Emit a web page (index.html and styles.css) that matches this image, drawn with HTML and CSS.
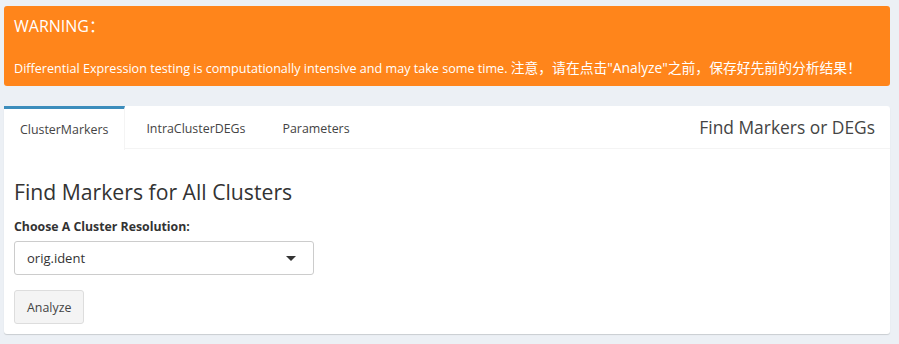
FILE: index.html
```html
<!DOCTYPE html>
<html>
<head>
<meta charset="utf-8">
<link rel="stylesheet" href="styles.css">
</head>
<body>
<div class="warning">
  <div class="warn-title">WARNING：</div>
  <div class="warn-text">Differential Expression testing is computationally intensive and may take some time. <span class="cjk">注意，请在点击"Analyze"之前，保存好先前的分析结果！</span></div>
</div>
<div class="tabbox">
  <div class="tabbar">
    <div class="tab active">ClusterMarkers</div>
    <div class="tab">IntraClusterDEGs</div>
    <div class="tab">Parameters</div>
    <div class="tab-title">Find Markers or DEGs</div>
  </div>
  <div class="tab-body">
    <h3 class="heading">Find Markers for All Clusters</h3>
    <div class="label">Choose A Cluster Resolution:</div>
    <div class="select"><span>orig.ident</span><span class="caret"></span></div>
    <div class="btn">Analyze</div>
  </div>
</div>
</body>
</html>
```
FILE: styles.css
```css
html, body { margin: 0; }
body {
  background: #ecf0f5;
  padding: 6px 9px 10px 4px;
  font-family: "Open Sans", "Noto Sans CJK SC", sans-serif;
  color: #333;
}
.warning {
  background: #ff851b;
  color: #fff;
  border-radius: 3px;
  height: 80px;
  box-sizing: border-box;
  padding: 10px 10px 0 10px;
}
.warn-title { font-size: 16px; line-height: 20px; }
.warn-text { font-size: 12.6px; line-height: 16px; margin-top: 24px; white-space: nowrap; }
.warn-text .cjk { font-size: 13.8px; }
.tabbox {
  margin-top: 20px;
  background: #fff;
  border-radius: 3px;
  box-shadow: 0 1px 1px rgba(0,0,0,0.15);
  height: 228px;
}
.tabbar {
  display: flex;
  align-items: stretch;
  height: 43px;
  border-bottom: 1px solid #f4f4f4;
  box-sizing: border-box;
}
.tab {
  font-size: 12.4px;
  color: #444;
  padding: 0 16px;
  margin-right: 5px;
  display: flex;
  align-items: center;
  border-top: 3px solid transparent;
  box-sizing: border-box;
}
.tab.active {
  border-top-color: #3c8dbc;
  border-right: 1px solid #f4f4f4;
  height: 44px;
  background: #fff;
}
.tab-title {
  margin-left: auto;
  font-size: 17.4px;
  color: #444;
  padding-right: 15px;
  display: flex;
  align-items: center;
}
.tab-body { padding: 10px 10px; }
.heading {
  font-weight: 400;
  font-size: 21.2px;
  margin: 20px 0 13px;
  line-height: 26px;
}
.label { font-size: 12.3px; font-weight: 700; margin-bottom: 6px; }
.select {
  width: 300px;
  height: 34px;
  box-sizing: border-box;
  border: 1px solid #ccc;
  border-radius: 3px;
  display: flex;
  align-items: center;
  justify-content: space-between;
  padding: 0 17px 0 12px;
  font-size: 13px;
}
.caret {
  width: 0; height: 0;
  border-left: 5px solid transparent;
  border-right: 5px solid transparent;
  border-top: 5px solid #333;
}
.btn {
  margin-top: 15px;
  display: inline-flex;
  align-items: center;
  height: 34px;
  padding: 0 12px;
  box-sizing: border-box;
  background: #f4f4f4;
  border: 1px solid #ddd;
  border-radius: 3px;
  font-size: 12.4px;
  color: #444;
}
```
